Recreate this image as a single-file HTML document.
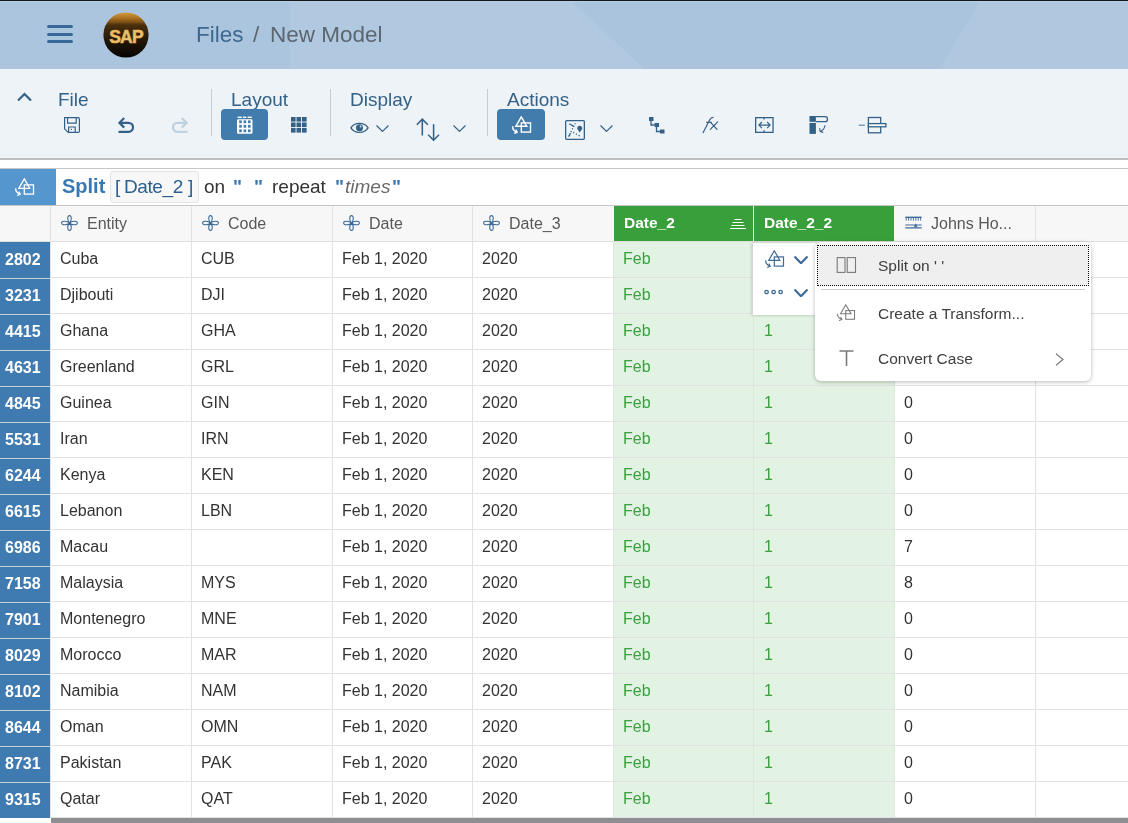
<!DOCTYPE html><html><head><meta charset="utf-8"><style>
*{margin:0;padding:0;box-sizing:border-box}
html,body{width:1128px;height:823px;overflow:hidden;background:#fff;font-family:"Liberation Sans",sans-serif;position:relative}
.a{position:absolute}
.t{position:absolute;white-space:nowrap;line-height:1;will-change:transform}
</style></head><body>
<div class="a" style="left:0;top:0;width:1128px;height:69px;background:#abc5de;overflow:hidden">
<svg class="a" style="left:0;top:0" width="1128" height="69"><polygon points="290,0 570,0 645,69 290,69" fill="#b0c9e0"/><polygon points="570,0 981,0 939,69 645,69" fill="#aac4dd"/><polygon points="981,0 1128,0 1128,69 939,69" fill="#afc8df"/></svg>
<div class="a" style="left:0;top:0;width:1128px;height:1px;background:#161616"></div>
<div class="a" style="left:0;top:1px;width:1128px;height:1px;background:#b6d0e8"></div>
<div class="a" style="left:47px;top:25px;width:26px;height:3px;border-radius:1.5px;background:#36699a"></div>
<div class="a" style="left:47px;top:32.5px;width:26px;height:3px;border-radius:1.5px;background:#36699a"></div>
<div class="a" style="left:47px;top:40px;width:26px;height:3px;border-radius:1.5px;background:#36699a"></div>
<svg class="a" style="left:103px;top:12px" width="46" height="46" viewBox="0 0 46 46">
<defs><linearGradient id="lg" x1="0" y1="0" x2="0" y2="1"><stop offset="0" stop-color="#d49a3a"/><stop offset="0.14" stop-color="#a86e20"/><stop offset="0.28" stop-color="#4a300c"/><stop offset="0.5" stop-color="#2e1e0a"/><stop offset="0.72" stop-color="#1a1206"/><stop offset="1" stop-color="#060403"/></linearGradient></defs>
<circle cx="23" cy="23" r="22.6" fill="url(#lg)"/>
<rect x="6" y="9" width="34" height="1.5" fill="#8a5a18" opacity="0.6"/>
<text x="23" y="30.5" text-anchor="middle" font-family="Liberation Sans" font-weight="bold" font-size="17.5" fill="#efc36a" stroke="#e0b058" stroke-width="0.6" letter-spacing="-0.8">SAP</text>
</svg>
<div class="t" style="left:196px;top:23.5px;font-size:22.5px;color:#3f6890">Files</div>
<div class="t" style="left:253px;top:23.5px;font-size:22.5px;color:#5b6670">/</div>
<div class="t" style="left:270px;top:23.5px;font-size:22.5px;color:#5b6670">New Model</div>
</div>
<div class="a" style="left:0;top:69px;width:1128px;height:89px;background:#eef3f8"></div>
<div class="a" style="left:0;top:158px;width:1128px;height:2px;background:#bdbfc1"></div>
<svg class="a" style="left:16px;top:91px" width="17" height="12"><polyline points="2,9.5 8.5,3 15,9.5" fill="none" stroke="#346187" stroke-width="2.2"/></svg>
<div class="t" style="left:58px;top:90px;font-size:19px;color:#346187">File</div>
<div class="t" style="left:231px;top:90px;font-size:19px;color:#346187">Layout</div>
<div class="t" style="left:350px;top:90px;font-size:19px;color:#346187">Display</div>
<div class="t" style="left:507px;top:90px;font-size:19px;color:#346187">Actions</div>
<div class="a" style="left:211px;top:89px;width:1px;height:47px;background:#c5ccd3"></div>
<div class="a" style="left:330px;top:89px;width:1px;height:47px;background:#c5ccd3"></div>
<div class="a" style="left:487px;top:89px;width:1px;height:47px;background:#c5ccd3"></div>
<svg class="a" style="left:64px;top:117px" width="16" height="16" viewBox="0 0 16 16" fill="none" stroke="#346187" stroke-width="1.2">
<path d="M0.6 0.6 H14.2 Q15.4 0.6 15.4 1.8 V14.2 Q15.4 15.4 14.2 15.4 H4.2 L0.6 11.8 Z"/><path d="M3.6 0.6 V6.2 H12.2 V0.6"/><path d="M4.6 15.4 V10 H11.2 V15.4"/><rect x="6.8" y="11.8" width="1.2" height="1.2" fill="#346187" stroke="none"/></svg>
<svg class="a" style="left:118px;top:117px" width="16" height="16" viewBox="0 0 16 16" fill="none" stroke="#346187" stroke-width="2.2" stroke-linecap="butt">
<path d="M6.2 1 L1.4 5.8 L6.2 10.6"/><path d="M1.6 5.8 H10.5 A4 4 0 0 1 10.5 14.8 H0.5"/></svg>
<svg class="a" style="left:172px;top:117px" width="16" height="16" viewBox="0 0 16 16" fill="none" stroke="#bfd0df" stroke-width="2.2">
<path d="M9.8 1 L14.6 5.8 L9.8 10.6"/><path d="M14.4 5.8 H5.5 A4 4 0 0 0 5.5 14.8 H15.5"/></svg>
<div class="a" style="left:221px;top:109px;width:47px;height:31px;border-radius:4px;background:#427cac"></div>
<svg class="a" style="left:237px;top:116px" width="16" height="18" viewBox="0 0 16 18">
<rect x="0" y="3.2" width="15.5" height="14.5" rx="1.2" fill="#fff"/>
<rect x="0.6" y="0.6" width="4.2" height="1.4" fill="#fff"/><rect x="6" y="0.6" width="3.3" height="1.4" fill="#fff"/><rect x="10.6" y="0.6" width="4.2" height="1.4" fill="#fff"/>
<rect x="2.2" y="4.4" width="2.6" height="2.8" fill="#427cac"/><rect x="2.2" y="8.9" width="2.6" height="2.8" fill="#427cac"/><rect x="2.2" y="13.4" width="2.6" height="2.8" fill="#427cac"/><rect x="6.6000000000000005" y="4.4" width="2.6" height="2.8" fill="#427cac"/><rect x="6.6000000000000005" y="8.9" width="2.6" height="2.8" fill="#427cac"/><rect x="6.6000000000000005" y="13.4" width="2.6" height="2.8" fill="#427cac"/><rect x="11.0" y="4.4" width="2.6" height="2.8" fill="#427cac"/><rect x="11.0" y="8.9" width="2.6" height="2.8" fill="#427cac"/><rect x="11.0" y="13.4" width="2.6" height="2.8" fill="#427cac"/></svg>
<svg class="a" style="left:291px;top:117px" width="16" height="16" viewBox="0 0 16 16"><rect x="0.0" y="0.0" width="4.6" height="4.6" fill="#346187"/><rect x="0.0" y="5.5" width="4.6" height="4.6" fill="#346187"/><rect x="0.0" y="11.0" width="4.6" height="4.6" fill="#346187"/><rect x="5.5" y="0.0" width="4.6" height="4.6" fill="#346187"/><rect x="5.5" y="5.5" width="4.6" height="4.6" fill="#346187"/><rect x="5.5" y="11.0" width="4.6" height="4.6" fill="#346187"/><rect x="11.0" y="0.0" width="4.6" height="4.6" fill="#346187"/><rect x="11.0" y="5.5" width="4.6" height="4.6" fill="#346187"/><rect x="11.0" y="11.0" width="4.6" height="4.6" fill="#346187"/></svg>
<svg class="a" style="left:350px;top:121px" width="19" height="14" viewBox="0 0 19 14">
<path d="M0.9 6.8 C4.5 0.8 14.5 0.8 18.1 6.8 C14.5 12.8 4.5 12.8 0.9 6.8 Z" fill="none" stroke="#346187" stroke-width="1.35"/><circle cx="9.5" cy="6.7" r="3.5" fill="#346187"/><circle cx="10.6" cy="5.5" r="0.9" fill="#dfe8f0"/></svg>
<svg class="a" style="left:376px;top:125px" width="13" height="7.2" viewBox="0 0 13 7.2"><polyline points="0.5,0.5 6.5,6.4 12.5,0.5" fill="none" stroke="#346187" stroke-width="1.2"/></svg>
<svg class="a" style="left:415px;top:118px" width="27" height="24" viewBox="0 0 27 24" fill="none" stroke="#346187" stroke-width="1.55">
<path d="M7.3 1.5 V17.5"/><path d="M1.8 6.7 L7.3 1.2 L12.8 6.7"/><path d="M18.6 6.2 V22.3"/><path d="M13.2 16.8 L18.6 22.2 L24 16.8"/></svg>
<svg class="a" style="left:453px;top:125px" width="13" height="7.2" viewBox="0 0 13 7.2"><polyline points="0.5,0.5 6.5,6.4 12.5,0.5" fill="none" stroke="#346187" stroke-width="1.2"/></svg>
<div class="a" style="left:497px;top:109px;width:48px;height:31px;border-radius:4px;background:#427cac"></div>
<svg class="a" style="left:511px;top:116px" width="21.0" height="18.0" viewBox="0 0 21 18" fill="none" stroke="#ffffff" stroke-width="1.4">
<path d="M10.3 0.8 L4.8 10.3 H15.8 Z"/><rect x="10.3" y="6.9" width="9.2" height="9.2"/><path d="M1.6 10.3 Q1.6 14.8 6 16.2"/><path d="M3.2 17.5 L6.2 16.2 L4.8 13.6"/></svg>
<svg class="a" style="left:565px;top:120px" width="20" height="20" viewBox="0 0 20 20" fill="none" stroke="#346187">
<rect x="0.65" y="0.65" width="18.7" height="18.7" rx="1" stroke-width="1.3"/>
<path d="M4.2 3.8 L9.3 6.6" stroke-width="1.3"/><path d="M9.6 3.6 L10.6 3.6" stroke-width="1.2"/>
<path d="M7.2 8.2 L7.7 9.2" stroke-width="1.2"/><path d="M5.5 11.4 L6.8 11.8" stroke-width="1.2"/>
<path d="M5.3 13 Q4.8 15.5 3.4 16.6" stroke-width="1.3"/>
<path d="M8.2 12.4 L9.2 12.9 M10.9 13.8 L11.9 14.3 M13.5 15.3 L14.7 15.8" stroke-width="1.3"/>
<path d="M14.7 12.6 L12.3 9 A2.5 2.5 0 1 1 17.1 9 Z" fill="#346187" stroke="none"/></svg>
<svg class="a" style="left:600px;top:125px" width="13" height="7.2" viewBox="0 0 13 7.2"><polyline points="0.5,0.5 6.5,6.4 12.5,0.5" fill="none" stroke="#346187" stroke-width="1.2"/></svg>
<svg class="a" style="left:649px;top:117px" width="16" height="17" viewBox="0 0 16 17" fill="#346187">
<rect x="0" y="0" width="4.5" height="4" /><rect x="5.5" y="6" width="4.5" height="4"/><rect x="11" y="12.5" width="4.5" height="4"/>
<path d="M2 4 V8 H5.5 M7.5 10 V14.5 H11" fill="none" stroke="#346187" stroke-width="1.3"/></svg>
<svg class="a" style="left:700px;top:112px" width="20" height="22" viewBox="0 0 20 22" fill="none" stroke="#346187" stroke-width="1.2" stroke-linecap="round">
<path d="M3.2 20.6 L9.6 8 Q11 5.3 13.1 5.3"/><path d="M6.7 10.3 H11.3"/><path d="M10.6 10.3 L17 17.4 M17.7 9.9 L10.3 17.4"/></svg>
<svg class="a" style="left:755px;top:117px" width="19" height="16" viewBox="0 0 19 16" fill="none" stroke="#346187" stroke-width="1.3">
<rect x="0.65" y="0.65" width="17.4" height="14.7"/><path d="M9 0.7 V2.6 M9 13.2 V15.3" /><path d="M4 8.1 H15 M6.9 5 L3.9 8.1 L6.9 11.2 M12.1 5 L15.1 8.1 L12.1 11.2" stroke-width="1.2"/></svg>
<svg class="a" style="left:809px;top:116px" width="20" height="18" viewBox="0 0 20 18" fill="none" stroke="#346187" stroke-width="1.3">
<rect x="0.5" y="0" width="6.4" height="5.8" fill="#346187" stroke="none"/><rect x="0.5" y="6.9" width="6.4" height="11" fill="#346187" stroke="none"/>
<path d="M6.9 0.65 H16.3 Q18.4 0.65 18.4 2.9 V3.4 Q18.4 5.6 16.3 5.6 H6.9"/><path d="M16 9.2 Q15.6 13.3 11.4 15.6" stroke-width="1.1"/><path d="M10.6 12.2 L11.2 15.6 L14.3 16.4" stroke-width="1.1"/></svg>
<svg class="a" style="left:858px;top:116px" width="29" height="18" viewBox="0 0 29 18" fill="none" stroke="#346187" stroke-width="1.3">
<path d="M0.8 9.2 H6.9" stroke-width="1.2" stroke="#5f83a6"/><rect x="10.4" y="1.5" width="12.3" height="15.3"/><rect x="10.4" y="7.6" width="17.5" height="3.2" fill="#f6f9fb"/></svg>
<div class="a" style="left:0;top:168px;width:1128px;height:1px;background:#c6c6c6"></div>
<div class="a" style="left:0;top:169px;width:56px;height:36px;background:#5496cd"></div>
<svg class="a" style="left:14px;top:178px" width="21.0" height="18.0" viewBox="0 0 21 18" fill="none" stroke="#ffffff" stroke-width="1.3">
<path d="M10.3 0.8 L4.8 10.3 H15.8 Z"/><rect x="10.3" y="6.9" width="9.2" height="9.2"/><path d="M1.6 10.3 Q1.6 14.8 6 16.2"/><path d="M3.2 17.5 L6.2 16.2 L4.8 13.6"/></svg>
<div class="t" style="left:62px;top:176px;font-size:20px;font-weight:bold;color:#3a78b0">Split</div>
<div class="a" style="left:110px;top:171px;width:89px;height:32px;border:1px solid #e3e3e3;border-radius:3px;background:#f7f7f7"></div>
<div class="t" style="left:115px;top:176.5px;font-size:19px;color:#2d5e90">[</div>
<div class="t" style="left:124px;top:176.5px;font-size:19px;color:#2d5e90;letter-spacing:-0.4px">Date_2</div>
<div class="t" style="left:188px;top:176.5px;font-size:19px;color:#2d5e90">]</div>
<div class="t" style="left:204px;top:176.5px;font-size:19px;color:#333">on</div>
<div class="t" style="left:233px;top:176.5px;font-size:19px;font-weight:bold;color:#3a78b0">"</div>
<div class="t" style="left:254px;top:176.5px;font-size:19px;font-weight:bold;color:#3a78b0">"</div>
<div class="t" style="left:272px;top:176.5px;font-size:19px;color:#333">repeat</div>
<div class="t" style="left:335px;top:176.5px;font-size:19px;font-weight:bold;color:#3a78b0">"</div>
<div class="t" style="left:345px;top:176.5px;font-size:19px;font-style:italic;color:#6a6a6a">times</div>
<div class="t" style="left:392px;top:176.5px;font-size:19px;font-weight:bold;color:#3a78b0">"</div>
<div class="a" style="left:0;top:205px;width:1128px;height:1px;background:#c6c6c6"></div>
<div class="a" style="left:0;top:206px;width:1128px;height:35px;background:#f7f7f7"></div>
<div class="a" style="left:0;top:241px;width:1128px;height:1px;background:#dedede"></div>
<div class="a" style="left:614px;top:206px;width:280px;height:35px;background:#389f3a"></div>
<div class="a" style="left:753px;top:206px;width:1px;height:35px;background:#e8f4e8"></div>
<div class="a" style="left:614px;top:242px;width:280px;height:576px;background:#e3f3e3"></div>
<div class="a" style="left:50px;top:206px;width:1px;height:612px;background:#e2e2e2"></div>
<div class="a" style="left:191px;top:206px;width:1px;height:612px;background:#e2e2e2"></div>
<div class="a" style="left:332px;top:206px;width:1px;height:612px;background:#e2e2e2"></div>
<div class="a" style="left:472px;top:206px;width:1px;height:612px;background:#e2e2e2"></div>
<div class="a" style="left:1035px;top:206px;width:1px;height:612px;background:#e2e2e2"></div>
<div class="a" style="left:613px;top:242px;width:1px;height:576px;background:#dfe6df"></div>
<div class="a" style="left:753px;top:242px;width:1px;height:576px;background:#dfe6df"></div>
<div class="a" style="left:894px;top:242px;width:1px;height:576px;background:#dfe6df"></div>
<div class="a" style="left:50px;top:277px;width:1078px;height:1px;background:#e2e2e2"></div>
<div class="a" style="left:50px;top:313px;width:1078px;height:1px;background:#e2e2e2"></div>
<div class="a" style="left:50px;top:349px;width:1078px;height:1px;background:#e2e2e2"></div>
<div class="a" style="left:50px;top:385px;width:1078px;height:1px;background:#e2e2e2"></div>
<div class="a" style="left:50px;top:421px;width:1078px;height:1px;background:#e2e2e2"></div>
<div class="a" style="left:50px;top:457px;width:1078px;height:1px;background:#e2e2e2"></div>
<div class="a" style="left:50px;top:493px;width:1078px;height:1px;background:#e2e2e2"></div>
<div class="a" style="left:50px;top:529px;width:1078px;height:1px;background:#e2e2e2"></div>
<div class="a" style="left:50px;top:565px;width:1078px;height:1px;background:#e2e2e2"></div>
<div class="a" style="left:50px;top:601px;width:1078px;height:1px;background:#e2e2e2"></div>
<div class="a" style="left:50px;top:637px;width:1078px;height:1px;background:#e2e2e2"></div>
<div class="a" style="left:50px;top:673px;width:1078px;height:1px;background:#e2e2e2"></div>
<div class="a" style="left:50px;top:709px;width:1078px;height:1px;background:#e2e2e2"></div>
<div class="a" style="left:50px;top:745px;width:1078px;height:1px;background:#e2e2e2"></div>
<div class="a" style="left:50px;top:781px;width:1078px;height:1px;background:#e2e2e2"></div>
<div class="a" style="left:50px;top:817px;width:1078px;height:1px;background:#e2e2e2"></div>
<div class="a" style="left:0;top:242px;width:50px;height:576px;background:#3f7ab0"></div>
<div class="a" style="left:0;top:278px;width:50px;height:1px;background:#c9cfd4"></div>
<div class="a" style="left:0;top:314px;width:50px;height:1px;background:#c9cfd4"></div>
<div class="a" style="left:0;top:350px;width:50px;height:1px;background:#c9cfd4"></div>
<div class="a" style="left:0;top:386px;width:50px;height:1px;background:#c9cfd4"></div>
<div class="a" style="left:0;top:422px;width:50px;height:1px;background:#c9cfd4"></div>
<div class="a" style="left:0;top:458px;width:50px;height:1px;background:#c9cfd4"></div>
<div class="a" style="left:0;top:494px;width:50px;height:1px;background:#c9cfd4"></div>
<div class="a" style="left:0;top:530px;width:50px;height:1px;background:#c9cfd4"></div>
<div class="a" style="left:0;top:566px;width:50px;height:1px;background:#c9cfd4"></div>
<div class="a" style="left:0;top:602px;width:50px;height:1px;background:#c9cfd4"></div>
<div class="a" style="left:0;top:638px;width:50px;height:1px;background:#c9cfd4"></div>
<div class="a" style="left:0;top:674px;width:50px;height:1px;background:#c9cfd4"></div>
<div class="a" style="left:0;top:710px;width:50px;height:1px;background:#c9cfd4"></div>
<div class="a" style="left:0;top:746px;width:50px;height:1px;background:#c9cfd4"></div>
<div class="a" style="left:0;top:782px;width:50px;height:1px;background:#c9cfd4"></div>
<svg class="a" style="left:61px;top:215px" width="17" height="16" viewBox="0 0 17 16" fill="none" stroke="#3d6a98" stroke-width="1.1">
<path d="M8.5 8 C6.4 6 5.9 0.6 8.5 0.6 C11.1 0.6 10.6 6 8.5 8 C10.6 10 11.1 15.4 8.5 15.4 C5.9 15.4 6.4 10 8.5 8 Z"/>
<path d="M8.5 8 C6.5 5.9 0.6 5.4 0.6 8 C0.6 10.6 6.5 10.1 8.5 8 C10.5 5.9 16.4 5.4 16.4 8 C16.4 10.6 10.5 10.1 8.5 8 Z"/><circle cx="8.5" cy="8" r="0.9" fill="#3d6a98" stroke="none"/></svg>
<div class="t" style="left:87px;top:215.5px;font-size:16px;color:#585858">Entity</div>
<svg class="a" style="left:202px;top:215px" width="17" height="16" viewBox="0 0 17 16" fill="none" stroke="#3d6a98" stroke-width="1.1">
<path d="M8.5 8 C6.4 6 5.9 0.6 8.5 0.6 C11.1 0.6 10.6 6 8.5 8 C10.6 10 11.1 15.4 8.5 15.4 C5.9 15.4 6.4 10 8.5 8 Z"/>
<path d="M8.5 8 C6.5 5.9 0.6 5.4 0.6 8 C0.6 10.6 6.5 10.1 8.5 8 C10.5 5.9 16.4 5.4 16.4 8 C16.4 10.6 10.5 10.1 8.5 8 Z"/><circle cx="8.5" cy="8" r="0.9" fill="#3d6a98" stroke="none"/></svg>
<div class="t" style="left:228px;top:215.5px;font-size:16px;color:#585858">Code</div>
<svg class="a" style="left:343px;top:215px" width="17" height="16" viewBox="0 0 17 16" fill="none" stroke="#3d6a98" stroke-width="1.1">
<path d="M8.5 8 C6.4 6 5.9 0.6 8.5 0.6 C11.1 0.6 10.6 6 8.5 8 C10.6 10 11.1 15.4 8.5 15.4 C5.9 15.4 6.4 10 8.5 8 Z"/>
<path d="M8.5 8 C6.5 5.9 0.6 5.4 0.6 8 C0.6 10.6 6.5 10.1 8.5 8 C10.5 5.9 16.4 5.4 16.4 8 C16.4 10.6 10.5 10.1 8.5 8 Z"/><circle cx="8.5" cy="8" r="0.9" fill="#3d6a98" stroke="none"/></svg>
<div class="t" style="left:369px;top:215.5px;font-size:16px;color:#585858">Date</div>
<svg class="a" style="left:483px;top:215px" width="17" height="16" viewBox="0 0 17 16" fill="none" stroke="#3d6a98" stroke-width="1.1">
<path d="M8.5 8 C6.4 6 5.9 0.6 8.5 0.6 C11.1 0.6 10.6 6 8.5 8 C10.6 10 11.1 15.4 8.5 15.4 C5.9 15.4 6.4 10 8.5 8 Z"/>
<path d="M8.5 8 C6.5 5.9 0.6 5.4 0.6 8 C0.6 10.6 6.5 10.1 8.5 8 C10.5 5.9 16.4 5.4 16.4 8 C16.4 10.6 10.5 10.1 8.5 8 Z"/><circle cx="8.5" cy="8" r="0.9" fill="#3d6a98" stroke="none"/></svg>
<div class="t" style="left:509px;top:215.5px;font-size:16px;color:#585858">Date_3</div>
<div class="t" style="left:624px;top:215px;font-size:15.5px;font-weight:bold;color:#fff">Date_2</div>
<svg class="a" style="left:730px;top:218px" width="16" height="12" viewBox="0 0 16 12" stroke="#fff" stroke-width="1"><path d="M4.5 1.5 H11.5 M2.5 4.5 H13.5 M1.5 7.5 H14.5 M0 10.5 H16"/></svg>
<div class="t" style="left:764px;top:215px;font-size:15.5px;font-weight:bold;color:#fff">Date_2_2</div>
<svg class="a" style="left:905px;top:216px" width="17" height="13" viewBox="0 0 17 13" fill="none" stroke="#3d6a98" stroke-width="0.9">
<path d="M0.3 1.3 H16.7" stroke-width="1.4"/><path d="M1.2 1.5 V4.6 M3.6 1.5 V4.6 M6 1.5 V4.6 M8.4 1.5 V4.6 M10.8 1.5 V4.6 M13.2 1.5 V4.6 M15.6 1.5 V4.6"/>
<path d="M0.3 9 H16.7 M0.3 11.8 H16.7" stroke-width="1.2"/><path d="M10.7 7.8 L9.3 10.8 H12.1 Z" fill="#3d6a98" stroke-width="0.6"/></svg>
<div class="t" style="left:931px;top:215.5px;font-size:16px;color:#585858">Johns Ho...</div>
<div class="t" style="left:5px;top:251.5px;font-size:16px;font-weight:bold;color:#fff">2802</div>
<div class="t" style="left:60px;top:251px;font-size:16px;color:#333">Cuba</div>
<div class="t" style="left:201px;top:251px;font-size:16px;color:#333">CUB</div>
<div class="t" style="left:342px;top:251px;font-size:16px;color:#333">Feb 1, 2020</div>
<div class="t" style="left:482px;top:251px;font-size:16px;color:#333">2020</div>
<div class="t" style="left:623px;top:251px;font-size:16px;color:#3a9f3f">Feb</div>
<div class="t" style="left:5px;top:287.5px;font-size:16px;font-weight:bold;color:#fff">3231</div>
<div class="t" style="left:60px;top:287px;font-size:16px;color:#333">Djibouti</div>
<div class="t" style="left:201px;top:287px;font-size:16px;color:#333">DJI</div>
<div class="t" style="left:342px;top:287px;font-size:16px;color:#333">Feb 1, 2020</div>
<div class="t" style="left:482px;top:287px;font-size:16px;color:#333">2020</div>
<div class="t" style="left:623px;top:287px;font-size:16px;color:#3a9f3f">Feb</div>
<div class="t" style="left:5px;top:323.5px;font-size:16px;font-weight:bold;color:#fff">4415</div>
<div class="t" style="left:60px;top:323px;font-size:16px;color:#333">Ghana</div>
<div class="t" style="left:201px;top:323px;font-size:16px;color:#333">GHA</div>
<div class="t" style="left:342px;top:323px;font-size:16px;color:#333">Feb 1, 2020</div>
<div class="t" style="left:482px;top:323px;font-size:16px;color:#333">2020</div>
<div class="t" style="left:623px;top:323px;font-size:16px;color:#3a9f3f">Feb</div>
<div class="t" style="left:764px;top:323px;font-size:16px;color:#3a9f3f">1</div>
<div class="t" style="left:5px;top:359.5px;font-size:16px;font-weight:bold;color:#fff">4631</div>
<div class="t" style="left:60px;top:359px;font-size:16px;color:#333">Greenland</div>
<div class="t" style="left:201px;top:359px;font-size:16px;color:#333">GRL</div>
<div class="t" style="left:342px;top:359px;font-size:16px;color:#333">Feb 1, 2020</div>
<div class="t" style="left:482px;top:359px;font-size:16px;color:#333">2020</div>
<div class="t" style="left:623px;top:359px;font-size:16px;color:#3a9f3f">Feb</div>
<div class="t" style="left:764px;top:359px;font-size:16px;color:#3a9f3f">1</div>
<div class="t" style="left:5px;top:395.5px;font-size:16px;font-weight:bold;color:#fff">4845</div>
<div class="t" style="left:60px;top:395px;font-size:16px;color:#333">Guinea</div>
<div class="t" style="left:201px;top:395px;font-size:16px;color:#333">GIN</div>
<div class="t" style="left:342px;top:395px;font-size:16px;color:#333">Feb 1, 2020</div>
<div class="t" style="left:482px;top:395px;font-size:16px;color:#333">2020</div>
<div class="t" style="left:623px;top:395px;font-size:16px;color:#3a9f3f">Feb</div>
<div class="t" style="left:764px;top:395px;font-size:16px;color:#3a9f3f">1</div>
<div class="t" style="left:904px;top:395px;font-size:16px;color:#333">0</div>
<div class="t" style="left:5px;top:431.5px;font-size:16px;font-weight:bold;color:#fff">5531</div>
<div class="t" style="left:60px;top:431px;font-size:16px;color:#333">Iran</div>
<div class="t" style="left:201px;top:431px;font-size:16px;color:#333">IRN</div>
<div class="t" style="left:342px;top:431px;font-size:16px;color:#333">Feb 1, 2020</div>
<div class="t" style="left:482px;top:431px;font-size:16px;color:#333">2020</div>
<div class="t" style="left:623px;top:431px;font-size:16px;color:#3a9f3f">Feb</div>
<div class="t" style="left:764px;top:431px;font-size:16px;color:#3a9f3f">1</div>
<div class="t" style="left:904px;top:431px;font-size:16px;color:#333">0</div>
<div class="t" style="left:5px;top:467.5px;font-size:16px;font-weight:bold;color:#fff">6244</div>
<div class="t" style="left:60px;top:467px;font-size:16px;color:#333">Kenya</div>
<div class="t" style="left:201px;top:467px;font-size:16px;color:#333">KEN</div>
<div class="t" style="left:342px;top:467px;font-size:16px;color:#333">Feb 1, 2020</div>
<div class="t" style="left:482px;top:467px;font-size:16px;color:#333">2020</div>
<div class="t" style="left:623px;top:467px;font-size:16px;color:#3a9f3f">Feb</div>
<div class="t" style="left:764px;top:467px;font-size:16px;color:#3a9f3f">1</div>
<div class="t" style="left:904px;top:467px;font-size:16px;color:#333">0</div>
<div class="t" style="left:5px;top:503.5px;font-size:16px;font-weight:bold;color:#fff">6615</div>
<div class="t" style="left:60px;top:503px;font-size:16px;color:#333">Lebanon</div>
<div class="t" style="left:201px;top:503px;font-size:16px;color:#333">LBN</div>
<div class="t" style="left:342px;top:503px;font-size:16px;color:#333">Feb 1, 2020</div>
<div class="t" style="left:482px;top:503px;font-size:16px;color:#333">2020</div>
<div class="t" style="left:623px;top:503px;font-size:16px;color:#3a9f3f">Feb</div>
<div class="t" style="left:764px;top:503px;font-size:16px;color:#3a9f3f">1</div>
<div class="t" style="left:904px;top:503px;font-size:16px;color:#333">0</div>
<div class="t" style="left:5px;top:539.5px;font-size:16px;font-weight:bold;color:#fff">6986</div>
<div class="t" style="left:60px;top:539px;font-size:16px;color:#333">Macau</div>
<div class="t" style="left:342px;top:539px;font-size:16px;color:#333">Feb 1, 2020</div>
<div class="t" style="left:482px;top:539px;font-size:16px;color:#333">2020</div>
<div class="t" style="left:623px;top:539px;font-size:16px;color:#3a9f3f">Feb</div>
<div class="t" style="left:764px;top:539px;font-size:16px;color:#3a9f3f">1</div>
<div class="t" style="left:904px;top:539px;font-size:16px;color:#333">7</div>
<div class="t" style="left:5px;top:575.5px;font-size:16px;font-weight:bold;color:#fff">7158</div>
<div class="t" style="left:60px;top:575px;font-size:16px;color:#333">Malaysia</div>
<div class="t" style="left:201px;top:575px;font-size:16px;color:#333">MYS</div>
<div class="t" style="left:342px;top:575px;font-size:16px;color:#333">Feb 1, 2020</div>
<div class="t" style="left:482px;top:575px;font-size:16px;color:#333">2020</div>
<div class="t" style="left:623px;top:575px;font-size:16px;color:#3a9f3f">Feb</div>
<div class="t" style="left:764px;top:575px;font-size:16px;color:#3a9f3f">1</div>
<div class="t" style="left:904px;top:575px;font-size:16px;color:#333">8</div>
<div class="t" style="left:5px;top:611.5px;font-size:16px;font-weight:bold;color:#fff">7901</div>
<div class="t" style="left:60px;top:611px;font-size:16px;color:#333">Montenegro</div>
<div class="t" style="left:201px;top:611px;font-size:16px;color:#333">MNE</div>
<div class="t" style="left:342px;top:611px;font-size:16px;color:#333">Feb 1, 2020</div>
<div class="t" style="left:482px;top:611px;font-size:16px;color:#333">2020</div>
<div class="t" style="left:623px;top:611px;font-size:16px;color:#3a9f3f">Feb</div>
<div class="t" style="left:764px;top:611px;font-size:16px;color:#3a9f3f">1</div>
<div class="t" style="left:904px;top:611px;font-size:16px;color:#333">0</div>
<div class="t" style="left:5px;top:647.5px;font-size:16px;font-weight:bold;color:#fff">8029</div>
<div class="t" style="left:60px;top:647px;font-size:16px;color:#333">Morocco</div>
<div class="t" style="left:201px;top:647px;font-size:16px;color:#333">MAR</div>
<div class="t" style="left:342px;top:647px;font-size:16px;color:#333">Feb 1, 2020</div>
<div class="t" style="left:482px;top:647px;font-size:16px;color:#333">2020</div>
<div class="t" style="left:623px;top:647px;font-size:16px;color:#3a9f3f">Feb</div>
<div class="t" style="left:764px;top:647px;font-size:16px;color:#3a9f3f">1</div>
<div class="t" style="left:904px;top:647px;font-size:16px;color:#333">0</div>
<div class="t" style="left:5px;top:683.5px;font-size:16px;font-weight:bold;color:#fff">8102</div>
<div class="t" style="left:60px;top:683px;font-size:16px;color:#333">Namibia</div>
<div class="t" style="left:201px;top:683px;font-size:16px;color:#333">NAM</div>
<div class="t" style="left:342px;top:683px;font-size:16px;color:#333">Feb 1, 2020</div>
<div class="t" style="left:482px;top:683px;font-size:16px;color:#333">2020</div>
<div class="t" style="left:623px;top:683px;font-size:16px;color:#3a9f3f">Feb</div>
<div class="t" style="left:764px;top:683px;font-size:16px;color:#3a9f3f">1</div>
<div class="t" style="left:904px;top:683px;font-size:16px;color:#333">0</div>
<div class="t" style="left:5px;top:719.5px;font-size:16px;font-weight:bold;color:#fff">8644</div>
<div class="t" style="left:60px;top:719px;font-size:16px;color:#333">Oman</div>
<div class="t" style="left:201px;top:719px;font-size:16px;color:#333">OMN</div>
<div class="t" style="left:342px;top:719px;font-size:16px;color:#333">Feb 1, 2020</div>
<div class="t" style="left:482px;top:719px;font-size:16px;color:#333">2020</div>
<div class="t" style="left:623px;top:719px;font-size:16px;color:#3a9f3f">Feb</div>
<div class="t" style="left:764px;top:719px;font-size:16px;color:#3a9f3f">1</div>
<div class="t" style="left:904px;top:719px;font-size:16px;color:#333">0</div>
<div class="t" style="left:5px;top:755.5px;font-size:16px;font-weight:bold;color:#fff">8731</div>
<div class="t" style="left:60px;top:755px;font-size:16px;color:#333">Pakistan</div>
<div class="t" style="left:201px;top:755px;font-size:16px;color:#333">PAK</div>
<div class="t" style="left:342px;top:755px;font-size:16px;color:#333">Feb 1, 2020</div>
<div class="t" style="left:482px;top:755px;font-size:16px;color:#333">2020</div>
<div class="t" style="left:623px;top:755px;font-size:16px;color:#3a9f3f">Feb</div>
<div class="t" style="left:764px;top:755px;font-size:16px;color:#3a9f3f">1</div>
<div class="t" style="left:904px;top:755px;font-size:16px;color:#333">0</div>
<div class="t" style="left:5px;top:791.5px;font-size:16px;font-weight:bold;color:#fff">9315</div>
<div class="t" style="left:60px;top:791px;font-size:16px;color:#333">Qatar</div>
<div class="t" style="left:201px;top:791px;font-size:16px;color:#333">QAT</div>
<div class="t" style="left:342px;top:791px;font-size:16px;color:#333">Feb 1, 2020</div>
<div class="t" style="left:482px;top:791px;font-size:16px;color:#333">2020</div>
<div class="t" style="left:623px;top:791px;font-size:16px;color:#3a9f3f">Feb</div>
<div class="t" style="left:764px;top:791px;font-size:16px;color:#3a9f3f">1</div>
<div class="t" style="left:904px;top:791px;font-size:16px;color:#333">0</div>
<div class="a" style="left:51px;top:818px;width:1077px;height:5px;background:#8e8e93"></div>
<div class="a" style="left:752px;top:243px;width:64px;height:72px;background:#fff;box-shadow:0 0 3px rgba(0,0,0,0.25);border-left:1px solid #d6d6d6"></div>
<svg class="a" style="left:764px;top:250px" width="21.0" height="18.0" viewBox="0 0 21 18" fill="none" stroke="#3d6a98" stroke-width="1.2">
<path d="M10.3 0.8 L4.8 10.3 H15.8 Z"/><rect x="10.3" y="6.9" width="9.2" height="9.2"/><path d="M1.6 10.3 Q1.6 14.8 6 16.2"/><path d="M3.2 17.5 L6.2 16.2 L4.8 13.6"/></svg>
<svg class="a" style="left:794px;top:256px" width="14" height="8" viewBox="0 0 14 8"><polyline points="0.5,0.5 7.0,7.2 13.5,0.5" fill="none" stroke="#3d6a98" stroke-width="2.2"/></svg>
<svg class="a" style="left:764px;top:289px" width="20" height="6" viewBox="0 0 20 6" fill="none" stroke="#3d6a98" stroke-width="1.3"><circle cx="2.6" cy="3" r="1.7"/><circle cx="9.6" cy="3" r="1.7"/><circle cx="16.6" cy="3" r="1.7"/></svg>
<svg class="a" style="left:794px;top:289px" width="14" height="8" viewBox="0 0 14 8"><polyline points="0.5,0.5 7.0,7.2 13.5,0.5" fill="none" stroke="#3d6a98" stroke-width="2.2"/></svg>
<div class="a" style="left:815px;top:242px;width:276px;height:139px;background:#fff;border-radius:6px;box-shadow:0 1px 4px rgba(0,0,0,0.28)"></div>
<div class="a" style="left:817px;top:245px;width:272px;height:41px;background:#efefef;border:1.5px dotted #111"></div>
<div class="a" style="left:821px;top:289px;width:264px;height:1px;background:#cfcfcf"></div>
<svg class="a" style="left:836px;top:257px" width="21" height="16" viewBox="0 0 21 16" fill="none" stroke="#7a7a7a" stroke-width="1.1"><rect x="1.2" y="0.6" width="7.8" height="14.8"/><rect x="11.2" y="0.6" width="8.3" height="14.8"/></svg>
<div class="t" style="left:878px;top:257.7px;font-size:15.5px;color:#404040">Split on ' '</div>
<svg class="a" style="left:836px;top:304px" width="19.95" height="17.099999999999998" viewBox="0 0 21 18" fill="none" stroke="#7a7a7a" stroke-width="1.1">
<path d="M10.3 0.8 L4.8 10.3 H15.8 Z"/><rect x="10.3" y="6.9" width="9.2" height="9.2"/><path d="M1.6 10.3 Q1.6 14.8 6 16.2"/><path d="M3.2 17.5 L6.2 16.2 L4.8 13.6"/></svg>
<div class="t" style="left:878px;top:306.2px;font-size:15.5px;color:#404040">Create a Transform...</div>
<svg class="a" style="left:839px;top:350px" width="15" height="16" viewBox="0 0 15 16" fill="none" stroke="#7a7a7a" stroke-width="1.6"><path d="M0.5 1 H14.5 M7.5 1 V16"/></svg>
<div class="t" style="left:878px;top:350.9px;font-size:15.5px;color:#404040">Convert Case</div>
<svg class="a" style="left:1055px;top:353px" width="9" height="13" viewBox="0 0 9 13" fill="none" stroke="#7a7a7a" stroke-width="1.2"><polyline points="1,0.7 8,6.5 1,12.3"/></svg>
</body></html>
